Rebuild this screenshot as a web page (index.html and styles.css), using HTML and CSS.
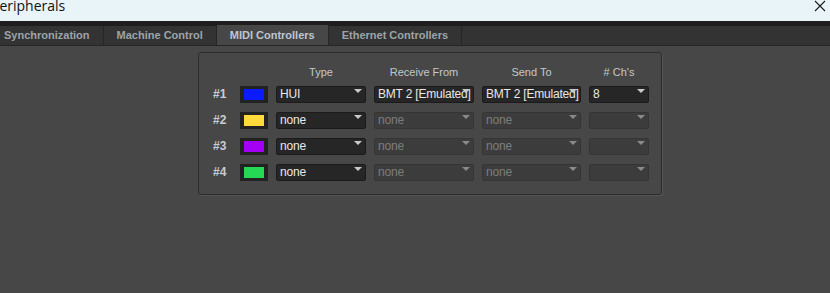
FILE: index.html
```html
<!DOCTYPE html>
<html lang="en">
<head>
    <meta charset="UTF-8">
    <title>Peripherals</title>
    <link rel="stylesheet" href="styles.css">
</head>
<body>
    <div class="titlebar">
        <span class="title">Peripherals</span>
        <svg class="close" width="12" height="12" viewBox="0 0 12 12">
            <path d="M1 1 L11 11 M11 1 L1 11" stroke="#1a1a1a" stroke-width="1.1" fill="none"/>
        </svg>
    </div>
    <div class="strip"></div>
    <div class="tabs">
        <div class="tab first">Synchronization</div>
        <div class="tab">Machine Control</div>
        <div class="tab active">MIDI Controllers</div>
        <div class="tab">Ethernet Controllers</div>
    </div>
    <div class="content">
        <div class="panel">
            <div class="grid">
                <div></div>
                <div></div>
                <div class="head">Type</div>
                <div class="head">Receive From</div>
                <div class="head">Send To</div>
                <div class="head"># Ch's</div>

                <div class="num">#1</div>
                <div class="swatch"><span class="blue"></span></div>
                <div class="sel">HUI</div>
                <div class="sel">BMT 2 [Emulated]</div>
                <div class="sel">BMT 2 [Emulated]</div>
                <div class="sel">8</div>

                <div class="num">#2</div>
                <div class="swatch"><span class="yellow"></span></div>
                <div class="sel">none</div>
                <div class="sel off">none</div>
                <div class="sel off">none</div>
                <div class="sel off"></div>

                <div class="num">#3</div>
                <div class="swatch"><span class="purple"></span></div>
                <div class="sel">none</div>
                <div class="sel off">none</div>
                <div class="sel off">none</div>
                <div class="sel off"></div>

                <div class="num">#4</div>
                <div class="swatch"><span class="green"></span></div>
                <div class="sel">none</div>
                <div class="sel off">none</div>
                <div class="sel off">none</div>
                <div class="sel off"></div>
            </div>
        </div>
    </div>
</body>
</html>
```

FILE: styles.css
```css
html, body {
    margin: 0;
    height: 100%;
}
body {
    background-color: #474747;
    font-family: 'Liberation Sans', Arial, sans-serif;
    overflow: hidden;
}
.titlebar {
    height: 21px;
    background-color: #e8f4f7;
    display: flex;
    justify-content: space-between;
    align-items: flex-start;
}
.title {
    font-family: 'Open Sans', sans-serif;
    font-size: 14px;
    line-height: 14px;
    color: #111;
    margin-left: -9px;
    margin-top: -1px;
}
.close {
    margin: 0 4px 0 0;
}
.strip {
    height: 5px;
    background-color: #1e1e1e;
}
.tabs {
    height: 19px;
    background-color: #333333;
    display: flex;
    border-bottom: 1px solid #262626;
}
.tab {
    padding: 0 13px;
    font-size: 11px;
    font-weight: bold;
    line-height: 19px;
    color: #9ea3a9;
    border-right: 1px solid #262626;
}
.tab.first {
    margin-left: -9px;
}
.tab.active {
    background-color: #474747;
    color: #bcc6d3;
    margin-top: -1px;
    line-height: 20px;
    height: 20px;
}
.content {
    padding-top: 6px;
}
.panel {
    margin-left: 198px;
    width: 448px;
    padding: 13px 0 13px 14px;
    border: 1px solid #2c2c2c;
    border-radius: 3px;
    box-shadow: 1px 1px 0 #545454;
}
.grid {
    display: grid;
    grid-template-columns: 19px 28px 90px 100px 99px 60px;
    grid-template-rows: 11px 17px 17px 17px 17px;
    column-gap: 8px;
    row-gap: 9px;
}
.head {
    font-size: 11px;
    line-height: 13px;
    color: #c4c7cb;
    text-align: center;
}
.num {
    font-size: 12px;
    line-height: 17px;
    color: #c9ccd0;
    font-weight: bold;
}
.swatch {
    background-color: #222;
    padding: 3px 4px;
    box-sizing: border-box;
    display: flex;
}
.swatch span {
    flex: 1;
}
.blue { background-color: #0a1cff; }
.yellow { background-color: #ffda3a; }
.purple { background-color: #a300f5; }
.green { background-color: #25d955; }
.sel {
    position: relative;
    background-color: #262626;
    border: 1px solid #1b1b1b;
    border-radius: 2px;
    box-sizing: border-box;
    font-size: 12px;
    line-height: 15px;
    letter-spacing: -0.2px;
    color: #e8e8e8;
    padding-left: 3px;
    white-space: nowrap;
    overflow: hidden;
}
.sel::after {
    content: "";
    position: absolute;
    right: 3px;
    top: 2px;
    border-left: 4px solid transparent;
    border-right: 4px solid transparent;
    border-top: 4px solid #c8c8c8;
}
.sel.off {
    background-color: #3c3c3c;
    border-color: #353535;
    color: #7c7c7c;
}
.sel.off::after {
    border-top-color: #8a8a8a;
}
```
